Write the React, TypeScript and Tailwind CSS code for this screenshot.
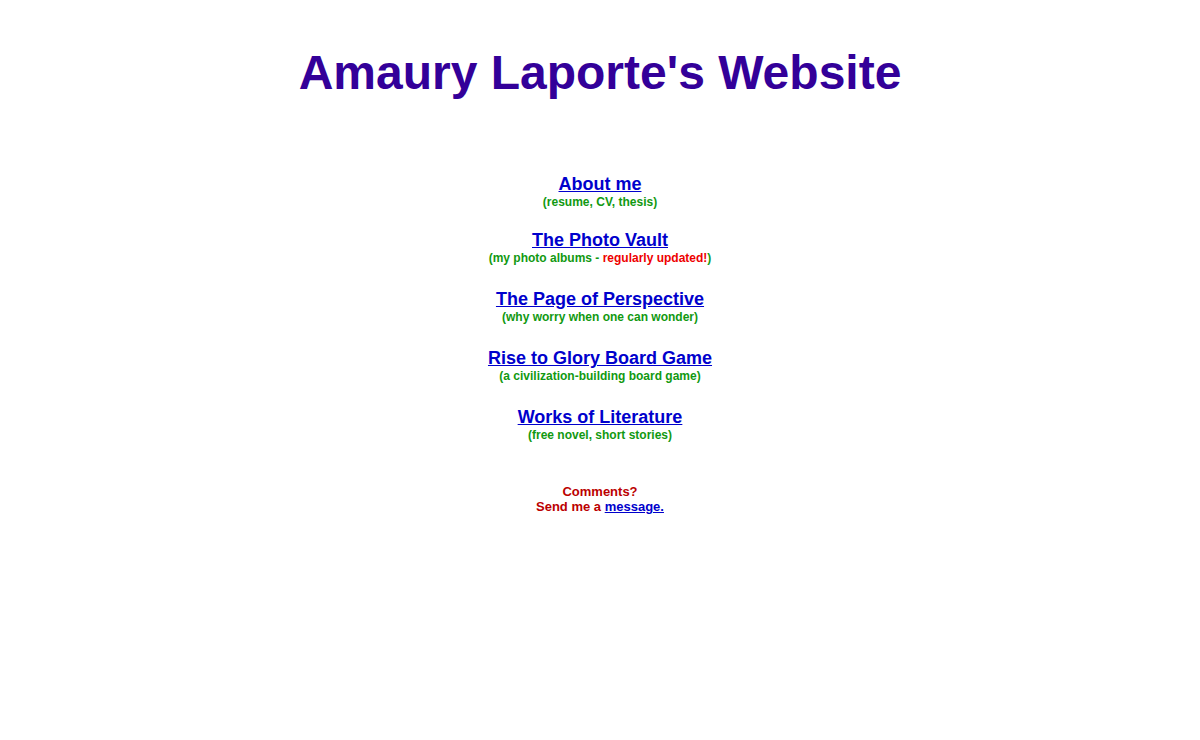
const links = [
  { title: 'About me', note: <>(resume, CV, thesis)</>, mt: 'mt-[74px]' },
  {
    title: 'The Photo Vault',
    note: (
      <>
        (my photo albums - <span className="text-[#ee0000]">regularly updated!</span>)
      </>
    ),
    mt: 'mt-[21px]',
  },
  { title: 'The Page of Perspective', note: <>(why worry when one can wonder)</>, mt: 'mt-[24px]' },
  { title: 'Rise to Glory Board Game', note: <>(a civilization-building board game)</>, mt: 'mt-[24px]' },
  { title: 'Works of Literature', note: <>(free novel, short stories)</>, mt: 'mt-[24px]' },
]

export default function App() {
  return (
    <div className="min-h-screen bg-white text-center font-['Liberation_Sans',Arial,sans-serif] font-bold pt-[46px]">
      <h1 className="text-[48px] leading-[54px] text-[#330099]">Amaury Laporte's Website</h1>

      {links.map(l => (
        <div key={l.title} className={l.mt}>
          <a href="#" className="block text-[18px] leading-[20px] text-[#0000cc] underline">
            {l.title}
          </a>
          <div className="mt-[1px] text-[12px] leading-[14px] text-[#119911]">{l.note}</div>
        </div>
      ))}

      <div className="mt-[42px] text-[13px] leading-[15px] text-[#bb0000]">
        <div>Comments?</div>
        <div>
          Send me a{' '}
          <a href="#" className="text-[#0000cc] underline">
            message.
          </a>
        </div>
      </div>
    </div>
  )
}
